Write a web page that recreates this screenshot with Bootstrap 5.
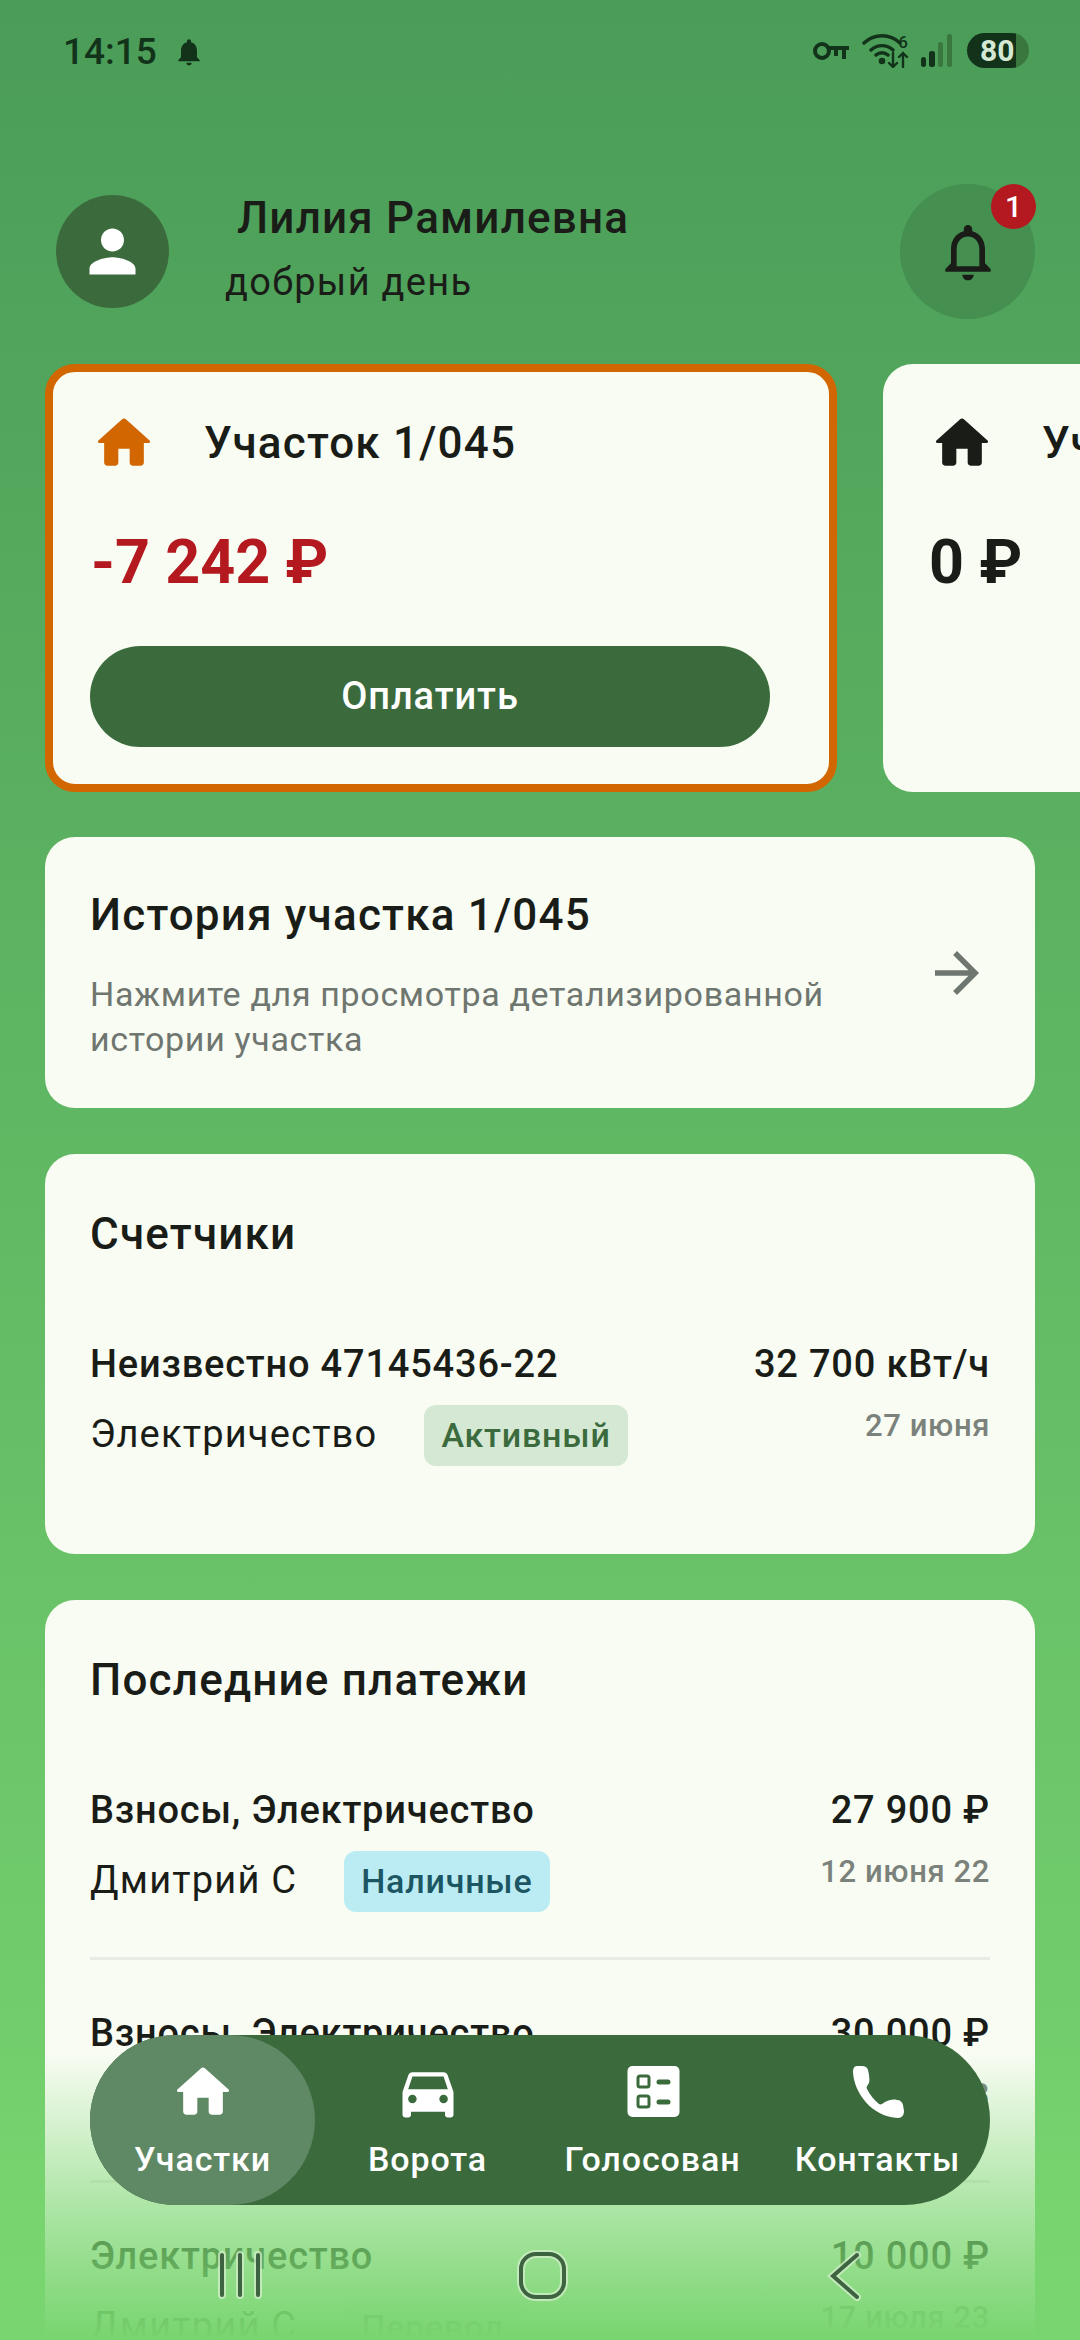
<!DOCTYPE html>
<html lang="ru">
<head>
    <meta charset="UTF-8">
    <meta name="viewport" content="width=device-width, initial-scale=1.0">
    <title>Участки</title>
    <link href="https://cdn.jsdelivr.net/npm/bootstrap@5.3.0/dist/css/bootstrap.min.css" rel="stylesheet">
    <style>
        html, body {
            height: 2340px;
            overflow: hidden;
        }
        body {
            font-family: Roboto, "Noto Sans", sans-serif;
            color: #1a1c18;
            background: linear-gradient(180deg, #4a9c58 0%, #78d56f 100%);
        }
        .phone-screen {
            position: relative;
            width: 1080px;
            height: 2340px;
            overflow: hidden;
        }
        /* status bar */
        .status-bar {
            height: 184px;
            padding: 30px 51px 0 63px;
            color: #12331a;
        }
        .status-time {
            font-size: 37px;
            font-weight: 500;
            line-height: 44px;
        }
        .status-icons {
            margin-top: 3px;
        }
        .sb-key {
            margin-right: 13px;
        }
        .sb-wifi {
            margin-right: 11px;
        }
        .sb-signal {
            margin-right: 15px;
        }
        .battery-pill {
            width: 62px;
            height: 35px;
            border-radius: 18px;
            background: linear-gradient(90deg, #12331a 79%, #39773f 79%);
            color: #d5e8d4;
            font-size: 30px;
            font-weight: 700;
            line-height: 35px;
            padding-left: 13px;
        }
        /* header */
        .top-row {
            height: 135px;
            padding: 0 45px 0 56px;
        }
        .avatar-circle {
            width: 113px;
            height: 113px;
            background: #3b6b3d;
        }
        .hello-box {
            padding-bottom: 7px;
        }
        .hello-name {
            font-size: 44px;
            font-weight: 480;
            line-height: 50px;
            padding-left: 12px;
            margin-bottom: 17px;
            letter-spacing: 1.2px;
        }
        .hello-sub {
            font-size: 38px;
            line-height: 44px;
            letter-spacing: 1.3px;
        }
        .bell-circle {
            width: 135px;
            height: 135px;
            background: #458f51;
        }
        .bell-count {
            width: 45px;
            height: 45px;
            top: 0;
            right: -1px;
            background: #b3191e;
            color: #fff;
            font-size: 30px;
            font-weight: 500;
            line-height: 45px;
        }
        /* plots */
        .plots-strip {
            margin-top: 45px;
            padding-left: 45px;
            gap: 46px;
            height: 428px;
        }
        .plot-card, .plain-card {
            background: #f8fcf2;
            border: 0;
            border-radius: 30px;
            color: #1a1c18;
        }
        .plot-card {
            flex: 0 0 792px;
            padding: 45px 0 0 47px;
        }
        .plot-active {
            border: 8px solid #d26600;
            padding: 37px 0 0 39px;
        }
        .plot-title {
            font-size: 44px;
            font-weight: 480;
            line-height: 50px;
            letter-spacing: 1.2px;
        }
        .plot-title svg {
            margin: 0 46px 0 -2px;
        }
        .plot-sum {
            margin-top: 50px;
            margin-left: -1px;
            font-size: 61px;
            font-weight: 700;
            line-height: 70px;
        }
        .minus-sum {
            color: #b3191e;
        }
        .pay-btn {
            width: 680px;
            height: 101px;
            margin: 49px 0 0 -2px;
            background: #3b6b3d;
            color: #fff;
            border: 0;
            border-radius: 51px;
            font-size: 38px;
            font-weight: 500;
            letter-spacing: .9px;
        }
        /* cards */
        .cards-col {
            padding: 45px 45px 0;
            gap: 46px;
        }
        .plain-card {
            padding: 55px 45px 45px;
        }
        .history-card {
            height: 271px;
            padding: 0 45px;
        }
        .history-box {
            padding-top: 6px;
        }
        .meters-card {
            height: 400px;
        }
        .card-head {
            font-size: 44px;
            font-weight: 480;
            line-height: 50px;
            letter-spacing: 1.2px;
        }
        .card-head-gap {
            margin-bottom: 32px;
        }
        .history-text {
            margin-top: 32px;
            font-size: 34px;
            line-height: 45px;
            letter-spacing: .66px;
            color: #6f7670;
        }
        .row-top {
            font-size: 38px;
            font-weight: 480;
            line-height: 44px;
            letter-spacing: .8px;
        }
        .row-sub {
            font-size: 38px;
            line-height: 61px;
            margin-top: 18px;
            letter-spacing: 1.2px;
        }
        .row-date {
            font-size: 31px;
            font-weight: 480;
            line-height: 36px;
            color: #7b827b;
            margin-top: 22px;
            letter-spacing: .6px;
            text-align: right;
        }
        .tag-pill {
            display: inline-block;
            height: 61px;
            margin-left: 47px;
            padding: 0 17px;
            border-radius: 12px;
            font-size: 34px;
            font-weight: 480;
            line-height: 61px;
            letter-spacing: .8px;
        }
        .tag-green {
            background: #d5e8d4;
            color: #3b6b3d;
        }
        .tag-blue {
            background: #bcecf3;
            color: #1d5663;
        }
        .tag-grey {
            background: #eef1ea;
            color: #6f7670;
        }
        .pay-row {
            padding-top: 51px;
            padding-bottom: 45px;
            border-bottom: 3px solid #e8ebe4;
        }
        .pay-row:last-child {
            border-bottom: 0;
        }
        /* fade and bottom nav */
        .bottom-fade {
            left: 0;
            right: 0;
            bottom: 0;
            height: 285px;
            background: linear-gradient(180deg, rgba(120, 213, 111, 0) 0%, rgba(120, 213, 111, .58) 53%, rgba(120, 213, 111, .8) 76%, rgba(120, 213, 111, 1) 100%);
        }
        .tab-bar {
            left: 90px;
            top: 2035px;
            width: 900px;
            height: 170px;
            border-radius: 85px;
            background: #3b6b3d;
        }
        .tab-item {
            flex: 0 0 225px;
            height: 170px;
            padding-top: 23px;
            border-radius: 85px;
            color: #fff;
            font-size: 34px;
            font-weight: 500;
            line-height: 40px;
            letter-spacing: .9px;
        }
        .tab-on {
            background: #5f8865;
        }
        .tab-item span {
            margin-top: 13px;
        }
        .sys-nav {
            left: 0;
            right: 0;
            top: 2248px;
        }
    </style>
</head>
<body>
    <div class="phone-screen">
        <div class="status-bar d-flex justify-content-between align-items-start">
            <div class="d-flex align-items-center gap-3">
                <span class="status-time">14:15</span>
                <svg width="32" height="32" viewBox="0 0 24 24" fill="#12331a"><path d="M12 22c1.1 0 2-.9 2-2h-4c0 1.1.9 2 2 2zm6-6v-5c0-3.07-1.63-5.64-4.5-6.32V4c0-.83-.67-1.5-1.5-1.5s-1.5.67-1.5 1.5v.68C7.64 5.36 6 7.92 6 11v5l-2 2v1h16v-1l-2-2z"/></svg>
            </div>
            <div class="status-icons d-flex align-items-center">
                <svg class="sb-key" width="36" height="20" viewBox="0 0 36 20" fill="none" stroke="#12331a" stroke-width="4"><circle cx="9" cy="10" r="7"/><path d="M16 7h20M31 7v11M23 7v8" /></svg>
                <svg class="sb-wifi" width="48" height="34" viewBox="0 0 48 34" fill="none" stroke="#12331a" stroke-width="3.4" stroke-linecap="round">
                    <path d="M2 9A26 26 0 0 1 38 9M9 16A16 16 0 0 1 31 16M14 21A9 9 0 0 1 26 21"/>
                    <circle cx="20" cy="27" r="1.6" fill="#12331a"/>
                    <path d="M31 19v14M27 29l4 4 4-4M41 33V19M37 23l4-4 4 4" stroke-width="2.4"/>
                    <text x="41" y="14" text-anchor="middle" font-size="17" font-weight="500" fill="#12331a" stroke="none">6</text>
                </svg>
                <svg class="sb-signal" width="31" height="33" viewBox="0 0 31 33"><rect x="0" y="23" width="5" height="10" rx="2.5" fill="#12331a"/><rect x="8" y="17" width="6" height="16" rx="2.5" fill="#12331a"/><rect x="17" y="8" width="5" height="25" rx="2.5" fill="#39773f"/><rect x="26" y="0" width="5" height="33" rx="2.5" fill="#39773f"/></svg>
                <div class="battery-pill">80</div>
            </div>
        </div>

        <div class="top-row d-flex justify-content-between align-items-center">
            <div class="d-flex align-items-center">
                <div class="avatar-circle rounded-circle d-flex align-items-center justify-content-center">
                    <svg width="69" height="69" viewBox="0 0 24 24" fill="#fff"><path d="M12 12c2.21 0 4-1.79 4-4s-1.79-4-4-4-4 1.79-4 4 1.79 4 4 4zm0 2c-2.67 0-8 1.34-8 4v2h16v-2c0-2.66-5.33-4-8-4z"/></svg>
                </div>
                <div class="hello-box ms-5 ps-2">
                    <div class="hello-name">Лилия Рамилевна</div>
                    <div class="hello-sub">добрый день</div>
                </div>
            </div>
            <div class="bell-circle rounded-circle position-relative d-flex align-items-center justify-content-center">
                <svg width="68" height="68" viewBox="0 0 24 24" fill="#1a1c18"><path d="M12 22c1.1 0 2-.9 2-2h-4c0 1.1.9 2 2 2zm6-6v-5c0-3.07-1.63-5.64-4.5-6.32V4c0-.83-.67-1.5-1.5-1.5s-1.5.67-1.5 1.5v.68C7.64 5.36 6 7.92 6 11v5l-2 2v1h16v-1l-2-2zm-2 1H8v-6c0-2.48 1.51-4.5 4-4.5s4 2.02 4 4.5v6z"/></svg>
                <span class="bell-count position-absolute rounded-circle text-center">1</span>
            </div>
        </div>

        <div class="plots-strip d-flex">
            <div class="plot-card plot-active">
                <div class="plot-title d-flex align-items-center">
                    <svg width="68" height="68" viewBox="0 0 24 24" fill="#d26600"><path d="M10 19v-5h4v5c0 .55.45 1 1 1h3c.55 0 1-.45 1-1v-7h1.7c.46 0 .68-.57.33-.87L12.67 3.6c-.38-.34-.96-.34-1.34 0l-8.36 7.53c-.34.3-.13.87.33.87H5v7c0 .55.45 1 1 1h3c.55 0 1-.45 1-1z"/></svg>
                    Участок 1/045
                </div>
                <div class="plot-sum minus-sum">-7 242 ₽</div>
                <button class="pay-btn btn">Оплатить</button>
            </div>
            <div class="plot-card">
                <div class="plot-title d-flex align-items-center">
                    <svg width="68" height="68" viewBox="0 0 24 24" fill="#1a1c18"><path d="M10 19v-5h4v5c0 .55.45 1 1 1h3c.55 0 1-.45 1-1v-7h1.7c.46 0 .68-.57.33-.87L12.67 3.6c-.38-.34-.96-.34-1.34 0l-8.36 7.53c-.34.3-.13.87.33.87H5v7c0 .55.45 1 1 1h3c.55 0 1-.45 1-1z"/></svg>
                    Участок 1/046
                </div>
                <div class="plot-sum">0 ₽</div>
            </div>
        </div>

        <div class="cards-col d-flex flex-column">
            <div class="plain-card history-card card d-flex flex-row align-items-center justify-content-between">
                <div class="history-box">
                    <div class="card-head">История участка 1/045</div>
                    <div class="history-text">Нажмите для просмотра детализированной<br>истории участка</div>
                </div>
                <svg width="66" height="66" viewBox="0 0 24 24" fill="#6f7670"><path d="M12 4l-1.41 1.41L16.17 11H4v2h12.17l-5.58 5.59L12 20l8-8z"/></svg>
            </div>

            <div class="plain-card meters-card card">
                <div class="card-head card-head-gap">Счетчики</div>
                <div class="d-flex justify-content-between pay-row border-0 pb-0">
                    <div>
                        <div class="row-top">Неизвестно 47145436-22</div>
                        <div class="row-sub">Электричество<span class="tag-pill tag-green">Активный</span></div>
                    </div>
                    <div class="text-end">
                        <div class="row-top">32 700 кВт/ч</div>
                        <div class="row-date">27 июня</div>
                    </div>
                </div>
            </div>

            <div class="plain-card card">
                <div class="card-head card-head-gap">Последние платежи</div>
                <div class="d-flex justify-content-between pay-row">
                    <div>
                        <div class="row-top">Взносы, Электричество</div>
                        <div class="row-sub">Дмитрий С<span class="tag-pill tag-blue">Наличные</span></div>
                    </div>
                    <div class="text-end">
                        <div class="row-top">27 900 ₽</div>
                        <div class="row-date">12 июня 22</div>
                    </div>
                </div>
                <div class="d-flex justify-content-between pay-row">
                    <div>
                        <div class="row-top">Взносы, Электричество</div>
                        <div class="row-sub">Дмитрий С<span class="tag-pill tag-blue">Наличные</span></div>
                    </div>
                    <div class="text-end">
                        <div class="row-top">30 000 ₽</div>
                        <div class="row-date">15 июня 23</div>
                    </div>
                </div>
                <div class="d-flex justify-content-between pay-row">
                    <div>
                        <div class="row-top">Электричество</div>
                        <div class="row-sub">Дмитрий С<span class="tag-pill tag-grey">Перевод</span></div>
                    </div>
                    <div class="text-end">
                        <div class="row-top">10 000 ₽</div>
                        <div class="row-date">17 июля 23</div>
                    </div>
                </div>
            </div>
        </div>

        <div class="bottom-fade position-absolute"></div>

        <div class="tab-bar position-absolute d-flex">
            <div class="tab-item tab-on d-flex flex-column align-items-center">
                <svg width="68" height="68" viewBox="0 0 24 24" fill="#fff"><path d="M10 19v-5h4v5c0 .55.45 1 1 1h3c.55 0 1-.45 1-1v-7h1.7c.46 0 .68-.57.33-.87L12.67 3.6c-.38-.34-.96-.34-1.34 0l-8.36 7.53c-.34.3-.13.87.33.87H5v7c0 .55.45 1 1 1h3c.55 0 1-.45 1-1z"/></svg>
                <span>Участки</span>
            </div>
            <div class="tab-item d-flex flex-column align-items-center">
                <svg width="68" height="68" viewBox="0 0 24 24" fill="#fff"><path d="M18.92 6.01C18.72 5.42 18.16 5 17.5 5h-11c-.66 0-1.21.42-1.42 1.01L3 12v8c0 .55.45 1 1 1h1c.55 0 1-.45 1-1v-1h12v1c0 .55.45 1 1 1h1c.55 0 1-.45 1-1v-8l-2.08-5.99zM6.5 16c-.83 0-1.5-.67-1.5-1.5S5.67 13 6.5 13s1.5.67 1.5 1.5S7.33 16 6.5 16zm11 0c-.83 0-1.5-.67-1.5-1.5s.67-1.5 1.5-1.5 1.5.67 1.5 1.5-.67 1.5-1.5 1.5zM5 11l1.5-4.5h11L19 11H5z"/></svg>
                <span>Ворота</span>
            </div>
            <div class="tab-item d-flex flex-column align-items-center">
                <svg width="68" height="68" viewBox="0 0 68 68"><rect x="8.5" y="8" width="52" height="51" rx="5" fill="#fff"/><g fill="none" stroke="#3b6b3d" stroke-width="3"><rect x="19" y="18" width="11" height="11" rx="2"/><rect x="19" y="38" width="11" height="11" rx="2"/></g><g stroke="#3b6b3d" stroke-width="5" stroke-linecap="round"><path d="M40 24h9M40 44h9"/></g></svg>
                <span>Голосован</span>
            </div>
            <div class="tab-item d-flex flex-column align-items-center">
                <svg width="68" height="68" viewBox="0 0 68 68" fill="#fff"><path d="M13 8C10 8 9 11 9 14C10 35 28 59 54 60C58 60 60 57 60 53L59 47C58.500 44 56 42 53 42C49 41 45 42 41 44C38 46 37 47 35 46C30 42 26 37 23 31C22 29 23 28 25 25C26 22 25 16 24 12C23 9 21 8 18 8Z"/></svg>
                <span>Контакты</span>
            </div>
        </div>

        <svg class="sys-nav position-absolute" width="1080" height="56" viewBox="0 0 1080 56" fill="none" stroke-linecap="round">
            <g stroke="#d8f0d0" stroke-opacity=".7" stroke-width="8">
                <path d="M222 7v40M240 7v40M258 7v40"/>
                <rect x="521" y="6" width="43" height="43" rx="15"/>
                <path d="M857 7l-24 21 24 21"/>
            </g>
            <g stroke="#3d6341" stroke-width="4">
                <path d="M222 7v40M240 7v40M258 7v40"/>
                <rect x="521" y="6" width="43" height="43" rx="15"/>
                <path d="M857 7l-24 21 24 21"/>
            </g>
        </svg>
    </div>

    <script src="https://cdn.jsdelivr.net/npm/bootstrap@5.3.0/dist/js/bootstrap.bundle.min.js"></script>
</body>
</html>
